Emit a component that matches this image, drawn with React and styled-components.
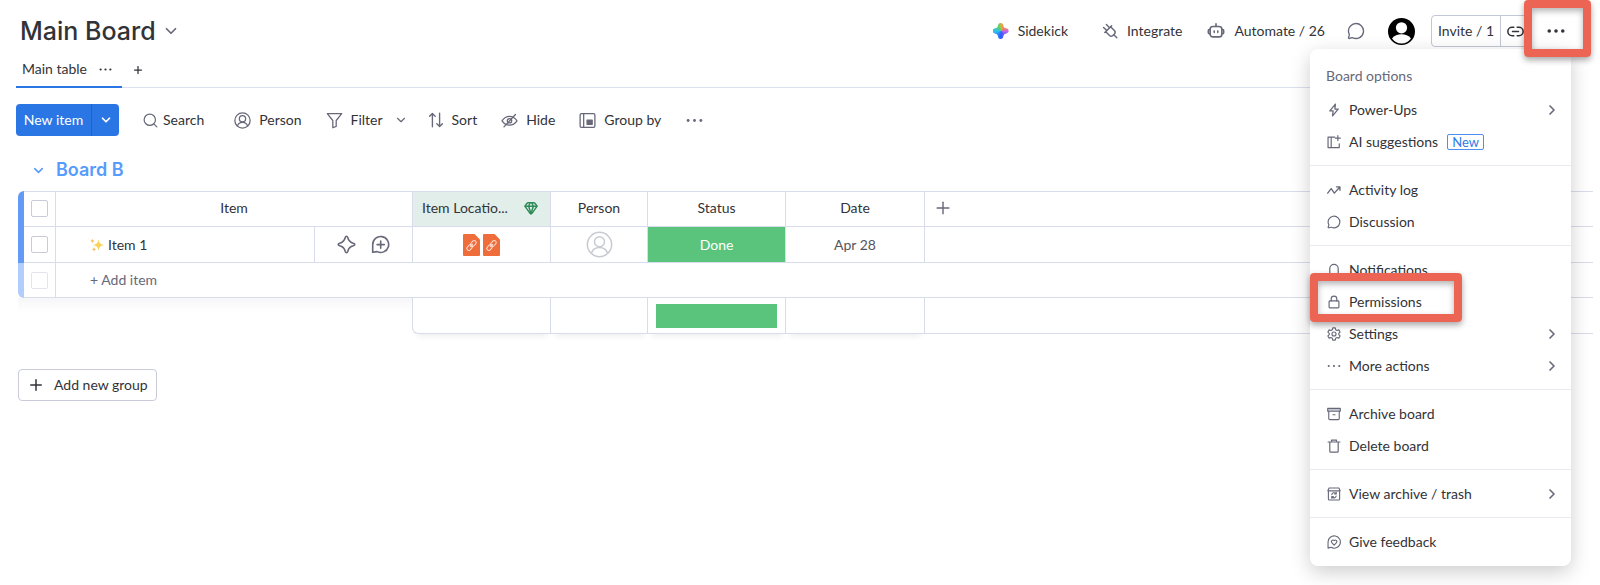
import React, { useState } from 'react';
import styled, { createGlobalStyle } from 'styled-components';
import {
    Bell,
    ChevronDown,
    ChevronRight,
    Gem,
    MessageCircle,
    Plus,
    Search,
} from 'lucide-react';


const GlobalStyle = createGlobalStyle`
    * {
        box-sizing: border-box;
    }
    body {
        margin: 0;
        background: #fff;
        color: #323338;
        font-family: Lato, "Liberation Sans", sans-serif;
        font-size: 14px;
        line-height: 20px;
    }
    button {
        font: inherit;
        color: inherit;
        background: none;
        border: none;
        padding: 0;
        cursor: pointer;
    }
    svg {
        display: block;
        flex-shrink: 0;
    }
`

const Page = styled.div`
    min-height: 100vh;
    padding: 0 7px 0 16px;
`

const Header = styled.header`
    display: flex;
    justify-content: space-between;
    height: 54px;
    padding: 15px 28px 0 4px;
`

const BoardTitle = styled.button`
    display: flex;
    align-items: center;
    gap: 6px;
    height: 32px;
    color: #676879;
`

const TitleText = styled.h1`
    margin: 0;
    font-family: Inter, "Liberation Sans", sans-serif;
    font-size: 25px;
    font-weight: 500;
    line-height: 32px;
    color: #323338;
`

const Actions = styled.div`
    display: flex;
    align-items: center;
    height: 32px;
`

const Action = styled.button`
    display: flex;
    align-items: center;
    gap: 9px;
    margin-right: ${props => props.$gap || 34}px;
    color: #323338;

    svg {
        color: #676879;
    }
`

const SidekickLogo = styled.span`
    width: 16px;
    height: 16px;
    background: conic-gradient(from 0deg, #f5a340, #f07a6a 60deg, #c86be8 90deg, #7a5cf5 130deg, #2d5bff 180deg, #2f8cf5 225deg, #2cc4ee 270deg, #4fce7a 320deg, #7ccf50 350deg, #f5a340);
    clip-path: path("M8 0c2 0 2.400 1.500 2.700 2.800.4 1.500 1 2.100 2.500 2.500 1.500.4 2.800.9 2.800 2.700s-1.300 2.300-2.800 2.700c-1.500.4-2.100 1-2.500 2.500-.3 1.500-.7 2.800-2.700 2.800s-2.400-1.300-2.700-2.800c-.4-1.500-1-2.100-2.500-2.500C1.300 10.300 0 9.800 0 8s1.300-2.300 2.800-2.700c1.500-.4 2.100-1 2.500-2.500C5.600 1.500 6 0 8 0z");
`

const InviteGroup = styled.div`
    display: flex;
    height: 32px;
    margin-right: 18px;
    border: 1px solid #c3c6d4;
    border-radius: 4px;
`

const InviteButton = styled.button`
    width: 69px;
    border-right: 1px solid #c3c6d4;
`

const LinkButton = styled.button`
    display: flex;
    align-items: center;
    padding: 0 4px 0 6px;
`

const MoreAnchor = styled.div`
    position: relative;
`

const MoreButton = styled.button`
    display: flex;
    width: 18px;
    height: 32px;
    align-items: center;
    color: #323338;
`

const Highlight = styled.span`
    position: absolute;
    z-index: 3;
    border: 8px solid #ec6453;
    border-radius: 4px;
    box-shadow: 0 3px 6px rgba(0, 0, 0, 0.35), inset 0 3px 6px rgba(0, 0, 0, 0.3);
    pointer-events: none;
`

const MoreHighlight = styled(Highlight)`
    top: -15px;
    left: -23px;
    width: 67px;
    height: 57px;
`

const PermissionsHighlight = styled(Highlight)`
    top: -13px;
    left: 0;
    width: 152px;
    height: 49px;
`

const Menu = styled.div`
    position: absolute;
    z-index: 2;
    top: 34px;
    right: -6px;
    width: 261px;
    padding: 12px 0 8px;
    border-radius: 8px;
    background: #fff;
    box-shadow: 0 6px 20px rgba(0, 0, 0, 0.2);
`

const MenuTitle = styled.div`
    padding: 5px 16px 8px;
    color: #676879;
`

const MenuSection = styled.div`
    padding-bottom: 7px;

    & + & {
        padding-top: 8px;
        border-top: 1px solid #e8eaf2;
    }
    &:last-child {
        padding-bottom: 0;
    }
`

const MenuRow = styled.div`
    position: relative;
`

const MenuItem = styled.button`
    display: flex;
    align-items: center;
    width: 100%;
    height: 32px;
    padding: 0 11px 0 17px;
    text-align: left;
    white-space: nowrap;

    svg {
        color: #676879;
    }
`

const MenuLabel = styled.span`
    margin-left: 8px;
`

const Arrow = styled.span`
    margin-left: auto;
`

const NewBadge = styled.span`
    margin-left: 9px;
    padding: 0 4px;
    border: 1px solid #4c8df0;
    border-radius: 2px;
    color: #2f7bea;
    font-size: 13px;
    line-height: 14px;
`

const Tabs = styled.nav`
    display: flex;
    align-items: flex-start;
    height: 34px;
    margin-right: 23px;
    border-bottom: 1px solid #dcdfec;
`

const Tab = styled.button`
    display: flex;
    align-items: center;
    gap: 12px;
    width: 106px;
    height: 34px;
    padding: 0 6px 2px;
    border-bottom: 2px solid #2b76e5;
    white-space: nowrap;
`

const AddTab = styled.button`
    display: flex;
    align-items: center;
    height: 32px;
    margin-left: 10px;
`

const Toolbar = styled.div`
    display: flex;
    align-items: center;
    margin-top: 16px;
    height: 32px;
`

const NewItem = styled.div`
    display: flex;
    width: 103px;
    height: 32px;
    margin-right: 23px;
    border-radius: 4px;
    background: #2b76e5;
    color: #fff;
`

const NewItemButton = styled.button`
    flex: 1;
    border-right: 1px solid #1f62c8;
`

const NewItemArrow = styled.button`
    display: flex;
    align-items: center;
    justify-content: center;
    width: 27px;
`

const Tool = styled.button`
    display: flex;
    align-items: center;
    gap: ${props => props.$inner || 8}px;
    margin-right: ${props => props.$gap || 24}px;
    white-space: nowrap;

    svg {
        color: #676879;
    }
`

const GroupTitle = styled.h2`
    display: flex;
    align-items: center;
    gap: 10px;
    height: 24px;
    margin: 22px 0 9px 15px;
    color: #579bfc;
    font-family: Inter, "Liberation Sans", sans-serif;
    font-size: 18px;
    font-weight: 600;
    line-height: 24px;
`

const Board = styled.table`
    width: calc(100% - 2px);
    margin-left: 2px;
    table-layout: fixed;
    border-collapse: separate;
    border-spacing: 0;
`

const Col = styled.col`
    width: ${props => props.$width}px;
`

const Row = styled.tr`
    height: ${props => props.$height || 36}px;
`

const Cell = styled.td`
    padding: 0;
    border-right: 1px solid #d9dcea;
    border-bottom: 1px solid #d9dcea;
    text-align: center;
    font-weight: 400;
    color: ${props => props.$color || '#323338'};

    &:last-child {
        border-right: none;
    }
`

const HeadCell = styled(Cell)`
    padding-bottom: 2px;
    border-top: 1px solid #d9dcea;
    background: ${props => props.$background || 'none'};
`

const Stripe = styled.td`
    padding: 0;
    background: ${props => props.$faded ? '#b0cdfb' : '#639af5'};
    border-top-left-radius: ${props => props.$first ? 6 : 0}px;
    border-bottom-left-radius: ${props => props.$faded ? 6 : 0}px;
`

const CheckBox = styled.input`
    appearance: none;
    display: block;
    width: 17px;
    height: 17px;
    margin: 0 auto;
    border: 1px solid #c9cbd9;
    border-radius: 2px;
    opacity: ${props => props.disabled ? 0.5 : 1};
`

const ItemName = styled(Cell)`
    padding-left: 34px;
    text-align: left;
`

const Inline = styled.div`
    display: flex;
    align-items: center;
    justify-content: ${props => props.$justify || 'center'};
    gap: ${props => props.$gap}px;

    svg {
        color: ${props => props.$color || '#676879'};
    }
`

const LocationHead = styled(Inline)`
    padding: 0 12px 0 9px;
`

const StatusCell = styled(Cell)`
    background: #5ac47d;
`

const AddItemCell = styled(Cell)`
    padding-left: 34px;
    text-align: left;
    color: #676879;
    background: #fff;
`

const AddColumn = styled.button`
    display: flex;
    padding-left: 8px;
    color: #676879;
`

const EmptyCell = styled.td`
    background: linear-gradient(#f6f6f8, #fff 14px);
`

const SummaryCell = styled(Cell)`
    height: 36px;
    padding: 0 8px;

    &:not(:last-child) {
        box-shadow: 0 6px 6px -4px rgba(0, 0, 0, 0.08);
    }
    &:nth-child(2) {
        border-bottom-left-radius: 6px;
        box-shadow: -1px 0 0 #d9dcea, 0 6px 6px -4px rgba(0, 0, 0, 0.08);
    }
`

const SummaryBar = styled.div`
    height: 24px;
    background: #5ac47d;
`

const AddGroup = styled.button`
    display: flex;
    align-items: center;
    gap: 9px;
    height: 32px;
    margin: 35px 0 0 2px;
    padding: 0 8px;
    border: 1px solid #c9cbdb;
    border-radius: 4px;
`

/* Icons */

const Icon = ({ size = 16, box = 20, width = 1.5, children }) => (
    <svg width={size} height={size} viewBox={`0 0 ${box} ${box}`} fill="none" stroke="currentColor"
        strokeWidth={width} strokeLinecap="round" strokeLinejoin="round" aria-hidden="true">
        {children}
    </svg>
)

const DotsIcon = ({ size = 16, r = 1.7 }) => (
    <Icon size={size}>
        <g fill="currentColor" stroke="none">
            <circle cx="2.500" cy="10" r={r} />
            <circle cx="10" cy="10" r={r} />
            <circle cx="17.500" cy="10" r={r} />
        </g>
    </Icon>
)

const PlugIcon = () => (
    <Icon width={1.8}>
        <path d="M3.500 12L12 3.500M10.800 4.700l4.700 4.700a3 3 0 0 1 0 4.200l-1.900 1.900a3 3 0 0 1-4.200 0l-4.700-4.700" />
        <path d="M14.800 14.800l3.700 3.700M6 9.500L2 5.500M9.500 6l-4-4" />
    </Icon>
)

const RobotIcon = () => (
    <Icon size={18} width={1.8}>
        <rect x="3.500" y="5" width="13" height="11.500" rx="3" />
        <path d="M10 2v3M3.500 8.500H2.500a1 1 0 0 0-1 1v2.500a1 1 0 0 0 1 1h1M16.500 8.500h1a1 1 0 0 1 1 1v2.500a1 1 0 0 1-1 1h-1M8 10v1.500M12 10v1.500" />
    </Icon>
)

const AvatarIcon = () => (
    <svg width="27" height="27" viewBox="0 0 27 27" role="img" aria-label="Account">
        <circle cx="13.500" cy="13.500" r="13.500" fill="#000" />
        <circle cx="13.500" cy="9.800" r="5.600" fill="#fff" />
        <path d="M4 20.600c2.300-3.300 5.700-4.400 9.500-4.400s7.200 1.100 9.500 4.400a11.800 11.800 0 0 1-19 0z" fill="#fff" />
    </svg>
)

const PersonIcon = ({ size = 17, width = 1.5 }) => (
    <Icon size={size} width={width}>
        <circle cx="10" cy="10" r="9" />
        <circle cx="10" cy="8" r="3.700" />
        <path d="M4 16.500c1-3 3.300-4.300 6-4.300s5 1.300 6 4.300" />
    </Icon>
)

const LinkIcon = () => (
    <Icon size={17} width={1.8}>
        <path d="M8 5H6a5 5 0 0 0 0 10h2M12 5h2a5 5 0 0 1 0 10h-2M6.500 10h7" />
    </Icon>
)

const FilterIcon = () => (
    <Icon size={17}>
        <path d="M1.500 2h17l-6.500 8v7l-4 1.500V10z" />
    </Icon>
)

const SortIcon = () => (
    <Icon size={16} width={1.7}>
        <path d="M5.500 18.500V2M2 5.300L5.500 1.800 9 5.300M14.500 1.500V18M11 14.700l3.500 3.500 3.500-3.500" />
    </Icon>
)

const HideIcon = () => (
    <Icon size={17}>
        <path d="M1.200 10.500C3.500 7 6.500 5.200 10 5.200s6.500 1.800 8.800 5.300c-2.300 3.300-5.300 5-8.800 5s-6.500-1.700-8.800-5z" />
        <circle cx="10" cy="10.300" r="2.600" />
        <path d="M3.500 17.500L17 3" />
    </Icon>
)

const GroupByIcon = () => (
    <Icon size={17}>
        <rect x="1.300" y="2" width="17.400" height="16" rx="1.500" />
        <path d="M5.500 2v16" />
        <path d="M9.500 9.500h6v5h-6z" fill="currentColor" />
    </Icon>
)

const SparkleIcon = () => (
    <Icon size={19} width={1.7}>
        <path d="M10 1.300c.8 0 1.100.6 1.400 1.600.9 3.400 2.300 4.800 5.700 5.700 1 .3 1.600.6 1.600 1.400s-.6 1.100-1.600 1.400c-3.400.9-4.800 2.300-5.700 5.700-.3 1-.6 1.600-1.400 1.600s-1.100-.6-1.400-1.600c-.9-3.400-2.300-4.800-5.700-5.700-1-.3-1.600-.6-1.600-1.400s.6-1.100 1.600-1.400c3.400-.9 4.800-2.300 5.700-5.700.3-1 .6-1.600 1.400-1.600z" />
    </Icon>
)

const BubblePlusIcon = () => (
    <Icon size={19} width={1.7}>
        <path d="M1.800 18.200V10a8.400 8.400 0 1 1 4.600 7.500z" />
        <path d="M10.200 6.300v7.600M6.400 10.100H14" />
    </Icon>
)

const SparklesEmoji = () => (
    <svg width="14" height="14" viewBox="0 0 14 14" fill="#fbd25a" aria-hidden="true">
        <path d="M8.500 1.500c.6 3.200 1.700 4.500 5.300 5.500-3.600 1-4.700 2.300-5.300 5.500C7.900 9.300 6.800 8 3.300 7c3.500-1 4.600-2.300 5.200-5.500z" />
        <path d="M2.400.6c.3 1.500.8 2 2.200 2.400C3.200 3.400 2.700 4 2.400 5.400 2.100 4 1.600 3.400.2 3 1.600 2.600 2.100 2.100 2.400.6z" fill="#f7bf6a" />
        <path d="M4 9c.3 1.500.8 2 2.200 2.400C4.800 11.800 4.300 12.300 4 13.800c-.3-1.500-.8-2-2.200-2.400C3.200 11 3.700 10.500 4 9z" fill="#f7bf6a" />
    </svg>
)

const FileLinkIcon = () => (
    <svg width="17" height="22" viewBox="0 0 17 22" aria-hidden="true">
        <path d="M1 0h10.500L17 5.500V21a1 1 0 0 1-1 1H1a1 1 0 0 1-1-1V1a1 1 0 0 1 1-1z" fill="#ef6c3b" />
        <g transform="rotate(-47 8.5 11.5)" fill="none" stroke="#fde0d4" strokeWidth="1">
            <rect x="2.500" y="9.500" width="6.500" height="4" rx="2" />
            <rect x="8" y="9.500" width="6.500" height="4" rx="2" />
            <path d="M6.500 11.500h4" />
        </g>
    </svg>
)

const BoltIcon = () => (
    <Icon size={14} width={1.8}>
        <path d="M12 1.500L4 11.300h4.700L8 18.500l8-9.800h-4.700z" />
    </Icon>
)

const AiIcon = () => (
    <Icon size={14} width={1.7}>
        <path d="M11 3H1.500v15h16v-5.500M6 3v15M15.500 1v7M12 4.500h7" />
    </Icon>
)

const ActivityIcon = () => (
    <Icon size={14} width={1.9}>
        <path d="M1 14.500L6 8l4.500 6.500L18 6M13.500 5.500H18.500V10.500" />
    </Icon>
)

const BellIcon = () => (
    <Icon size={14} width={1.7}>
        <path d="M2 15.500h16M4 15.500V8a6 6 0 0 1 12 0v7.500M8.500 18.500h3" />
    </Icon>
)

const SettingsIcon = () => (
    <Icon size={14} width={1.6}>
        <path d="M8.200 1.300h3.600l.6 2.500 2 1.100 2.500-.8 1.800 3.100-1.900 1.800v2l1.900 1.800-1.800 3.100-2.500-.8-2 1.100-.6 2.500H8.200l-.6-2.500-2-1.100-2.500.8-1.800-3.100L3.200 11V9L1.300 7.200l1.800-3.100 2.500.8 2-1.100z" />
        <circle cx="10" cy="10" r="2.900" />
    </Icon>
)

const LockIcon = () => (
    <Icon size={14} width={1.7}>
        <rect x="3" y="8.500" width="14" height="10" rx="1.200" />
        <path d="M6 8.500V5.500a4 4 0 0 1 8 0v3" />
    </Icon>
)

const ArchiveIcon = () => (
    <Icon size={14} width={1.6}>
        <path d="M1 2h18v4H1z" fill="#c5c7d0" />
        <path d="M2.500 6v10.500A1.500 1.500 0 0 0 4 18h12a1.500 1.500 0 0 0 1.500-1.500V6M8.500 11h3" />
    </Icon>
)

const TrashIcon = () => (
    <Icon size={14} width={1.7}>
        <path d="M1.500 4.300h17M6.500 4V1.500h7V4M4 4.500v13a1.300 1.300 0 0 0 1.300 1.300h9.400a1.300 1.300 0 0 0 1.300-1.300v-13" />
    </Icon>
)

const ArchiveTrashIcon = () => (
    <Icon size={14} width={1.6}>
        <path d="M3 1.500h14l1.800 4H1.200zM2 5.500v11.500A1.500 1.500 0 0 0 3.500 18.500h13a1.500 1.500 0 0 0 1.500-1.500V5.500" />
        <path d="M6.800 11a3.300 3.300 0 0 1 6-1.300M13.200 7.700v2.300h-2.300M13.200 12.800a3.300 3.300 0 0 1-6 1.300M6.800 16v-2.300h2.300" />
    </Icon>
)

const FeedbackIcon = () => (
    <Icon size={14} width={1.6}>
        <path d="M1.500 18.800V10a8.800 8.800 0 1 1 4.300 7.600z" />
        <path d="M10.200 14.500L6.800 11a2.200 2.200 0 0 1 3.400-2.900A2.200 2.200 0 0 1 13.600 11z" />
    </Icon>
)

const menuSections = [
    [
        { label: 'Power-Ups', icon: <BoltIcon />, arrow: true },
        { label: 'AI suggestions', icon: <AiIcon />, badge: 'New' },
    ],
    [
        { label: 'Activity log', icon: <ActivityIcon /> },
        { label: 'Discussion', icon: <MessageCircle size={14} strokeWidth={2} /> },
    ],
    [
        { label: 'Notifications', icon: <BellIcon /> },
        { label: 'Permissions', icon: <LockIcon />, highlighted: true },
        { label: 'Settings', icon: <SettingsIcon />, arrow: true },
        { label: 'More actions', icon: <DotsIcon size={14} r={1.5} />, arrow: true },
    ],
    [
        { label: 'Archive board', icon: <ArchiveIcon /> },
        { label: 'Delete board', icon: <TrashIcon /> },
    ],
    [
        { label: 'View archive / trash', icon: <ArchiveTrashIcon />, arrow: true },
    ],
    [
        { label: 'Give feedback', icon: <FeedbackIcon /> },
    ],
]

const BoardMenu = () => (
    <Menu>
        <MenuTitle>Board options</MenuTitle>
        {menuSections.map((items, index) => (
            <MenuSection key={index}>
                {items.map(item => (
                    <MenuRow key={item.label}>
                        <MenuItem>
                            {item.icon}
                            <MenuLabel>{item.label}</MenuLabel>
                            {item.badge && <NewBadge>{item.badge}</NewBadge>}
                            {item.arrow && <Arrow><ChevronRight size={16} strokeWidth={2.5} /></Arrow>}
                        </MenuItem>
                        {item.highlighted && <PermissionsHighlight />}
                    </MenuRow>
                ))}
            </MenuSection>
        ))}
    </Menu>
)

const BoardTable = () => {
    const [checked, setChecked] = useState(false);

    const handleCheck = e => setChecked(e.target.checked);

    return (
        <Board>
            <colgroup>
                <Col $width={6} />
                <Col $width={32} />
                <Col $width={259} />
                <Col $width={98} />
                <Col $width={138} />
                <Col $width={97} />
                <Col $width={138} />
                <Col $width={139} />
                <col />
            </colgroup>
            <thead>
                <Row>
                    <Stripe $first />
                    <HeadCell>
                        <CheckBox type="checkbox" aria-label="Select all items" checked={checked} onChange={handleCheck} />
                    </HeadCell>
                    <HeadCell as="th" colSpan={2}>Item</HeadCell>
                    <HeadCell as="th" $background="#e1eee9">
                        <LocationHead $justify="space-between" $color="#2e8b57">
                            Item Locatio...
                            <Gem size={14} strokeWidth={2.5} />
                        </LocationHead>
                    </HeadCell>
                    <HeadCell as="th">Person</HeadCell>
                    <HeadCell as="th">Status</HeadCell>
                    <HeadCell as="th">Date</HeadCell>
                    <HeadCell>
                        <AddColumn aria-label="Add column"><Plus size={20} strokeWidth={1.7} /></AddColumn>
                    </HeadCell>
                </Row>
            </thead>
            <tbody>
                <Row>
                    <Stripe />
                    <Cell>
                        <CheckBox type="checkbox" aria-label="Select Item 1" checked={checked} onChange={handleCheck} />
                    </Cell>
                    <ItemName>
                        <Inline $gap={4} $justify="flex-start"><SparklesEmoji />Item 1</Inline>
                    </ItemName>
                    <Cell>
                        <Inline $gap={15}><SparkleIcon /><BubblePlusIcon /></Inline>
                    </Cell>
                    <Cell>
                        <Inline $gap={3}><FileLinkIcon /><FileLinkIcon /></Inline>
                    </Cell>
                    <Cell>
                        <Inline $color="#c8cad2"><PersonIcon size={27} width={1.1} /></Inline>
                    </Cell>
                    <StatusCell $color="#fff">Done</StatusCell>
                    <Cell $color="#55565c">Apr 28</Cell>
                    <Cell />
                </Row>
                <Row $height={35}>
                    <Stripe $faded />
                    <Cell>
                        <CheckBox type="checkbox" aria-label="Select new item" disabled />
                    </Cell>
                    <AddItemCell colSpan={7}>+ Add item</AddItemCell>
                </Row>
            </tbody>
            <tfoot>
                <Row>
                    <EmptyCell colSpan={4} />
                    <SummaryCell />
                    <SummaryCell />
                    <SummaryCell><SummaryBar /></SummaryCell>
                    <SummaryCell />
                    <SummaryCell />
                </Row>
            </tfoot>
        </Board>
    )
}


export default () => {

    const [menuOpen, setMenuOpen] = useState(true);

    return (
        <Page>
            <GlobalStyle />
            <Header>
                <BoardTitle>
                    <TitleText>Main Board</TitleText>
                    <ChevronDown size={18} strokeWidth={2.3} />
                </BoardTitle>
                <Actions>
                    <Action><SidekickLogo />Sidekick</Action>
                    <Action $gap={25}><PlugIcon />Integrate</Action>
                    <Action $gap={22}><RobotIcon />Automate / 26</Action>
                    <Action $gap={23} aria-label="Discussion"><MessageCircle size={18} strokeWidth={1.8} /></Action>
                    <Action $gap={16}><AvatarIcon /></Action>
                    <InviteGroup>
                        <InviteButton>Invite / 1</InviteButton>
                        <LinkButton aria-label="Copy link"><LinkIcon /></LinkButton>
                    </InviteGroup>
                    <MoreAnchor>
                        <MoreButton aria-label="Board options" onClick={() => setMenuOpen(!menuOpen)}>
                            <DotsIcon size={18} r={2} />
                        </MoreButton>
                        {menuOpen && <BoardMenu />}
                        <MoreHighlight />
                    </MoreAnchor>
                </Actions>
            </Header>
            <Tabs>
                <Tab>Main table<DotsIcon size={13} /></Tab>
                <AddTab aria-label="Add view"><Plus size={12} strokeWidth={2.5} /></AddTab>
            </Tabs>
            <Toolbar>
                <NewItem>
                    <NewItemButton>New item</NewItemButton>
                    <NewItemArrow aria-label="More item types"><ChevronDown size={14} strokeWidth={3} /></NewItemArrow>
                </NewItem>
                <Tool $inner={4} $gap={30}><Search size={17} strokeWidth={1.7} />Search</Tool>
                <Tool><PersonIcon />Person</Tool>
                <Tool $gap={11}><FilterIcon />Filter</Tool>
                <Tool $gap={20} aria-label="Filter options"><ChevronDown size={14} strokeWidth={2} /></Tool>
                <Tool><SortIcon />Sort</Tool>
                <Tool><HideIcon />Hide</Tool>
                <Tool $gap={25}><GroupByIcon />Group by</Tool>
                <Tool aria-label="More tools"><DotsIcon size={17} /></Tool>
            </Toolbar>
            <GroupTitle>
                <ChevronDown size={15} strokeWidth={2.5} />
                Board B
            </GroupTitle>
            <BoardTable />
            <AddGroup><Plus size={18} strokeWidth={2} />Add new group</AddGroup>
        </Page>
    )
}
